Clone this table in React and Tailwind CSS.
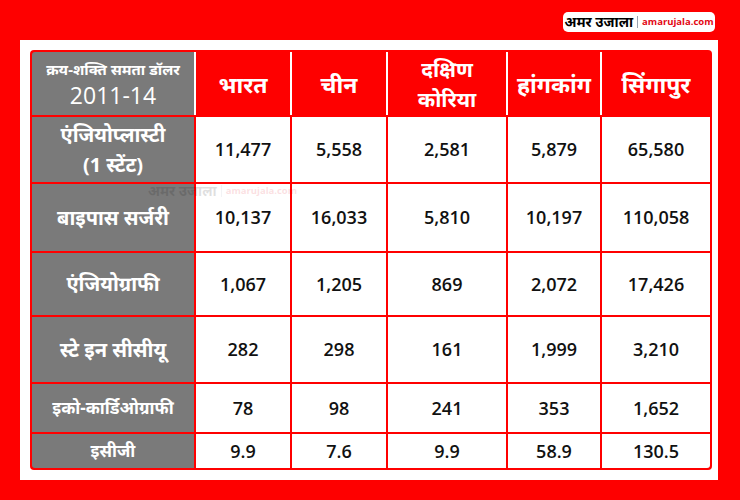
const headers = [
  ['भारत'],
  ['चीन'],
  ['दक्षिण', 'कोरिया'],
  ['हांगकांग'],
  ['सिंगापुर'],
];

const rows = [
  { label: ['एंजियोप्लास्टी', '(1 स्टेंट)'], size: 'text-[20px]', values: ['11,477', '5,558', '2,581', '5,879', '65,580'] },
  { label: ['बाइपास सर्जरी'], size: 'text-[20px]', values: ['10,137', '16,033', '5,810', '10,197', '110,058'] },
  { label: ['एंजियोग्राफी'], size: 'text-[20px]', values: ['1,067', '1,205', '869', '2,072', '17,426'] },
  { label: ['स्टे इन सीसीयू'], size: 'text-[20px]', values: ['282', '298', '161', '1,999', '3,210'] },
  { label: ['इको-कार्डिओग्राफी'], size: 'text-[17px]', values: ['78', '98', '241', '353', '1,652'] },
  { label: ['इसीजी'], size: 'text-[17px]', values: ['9.9', '7.6', '9.9', '58.9', '130.5'] },
];

const hindi = "font-['Noto_Sans','Noto_Sans_Devanagari','Lohit_Devanagari',sans-serif]";
const nums = "font-['Open_Sans','Noto_Sans',sans-serif]";

function Logo({ faint }) {
  return (
    <div className={`flex items-center gap-[4px] whitespace-nowrap ${faint ? 'opacity-[0.12]' : ''}`}>
      <span className={`${hindi} font-bold text-[14px] leading-none text-black`}>अमर उजाला</span>
      <span className="w-px h-[12px] bg-gray-400" />
      <span className={`${nums} font-bold text-[9.5px] leading-none text-[#e30613]`}>amarujala.com</span>
    </div>
  );
}

export default function App() {
  return (
    <div className="w-[740px] h-[500px] bg-[#fe0000] flex flex-col">
      <div className="h-[40px] flex items-start justify-end pr-[25px] pt-[12px]">
        <div className="h-[20px] w-[152px] bg-white rounded-[5px] flex items-center justify-center">
          <Logo />
        </div>
      </div>
      <div className="ml-[20px] w-[698px] h-[440px] bg-white pl-[10px] pr-[6px] pt-[10px]">
        <div className="relative grid grid-cols-[162px_94px_94px_118px_92px_108px] grid-rows-[63px_65px_67px_62px_65px_48px_34px] gap-[2px] p-[2px] bg-[#f00] rounded-[4px]">
          <div className="bg-[#7a7a7a] rounded-tl-[3px] flex flex-col items-center justify-center text-white">
            <span className={`${hindi} font-bold text-[15px] leading-[22px]`}>क्रय-शक्ति समता डॉलर</span>
            <span className={`${nums} text-[23px] leading-[30px]`}>2011-14</span>
          </div>
          {headers.map((h, i) => (
            <div
              key={i}
              className={`bg-[#fe0000] shadow-[-2px_0_0_#ffffff] flex flex-col items-center justify-center text-white ${hindi} font-bold ${h.length > 1 ? 'text-[21px] leading-[30px]' : 'text-[23px] leading-[30px]'} ${i === 4 ? 'rounded-tr-[3px]' : ''}`}
            >
              {h.map(t => <span key={t}>{t}</span>)}
            </div>
          ))}
          {rows.map((r, ri) => (
            <div key={ri} className="contents">
              <div className={`bg-[#7a7a7a] flex flex-col items-center justify-center text-white ${hindi} font-bold ${r.size} ${r.label.length > 1 ? 'leading-[30px]' : 'leading-[26px]'} ${ri === rows.length - 1 ? 'rounded-bl-[3px]' : ''}`}>
                {r.label.map(t => <span key={t}>{t}</span>)}
              </div>
              {r.values.map((v, vi) => (
                <div
                  key={vi}
                  className={`bg-white flex items-center justify-center text-[#111] ${nums} font-semibold text-[18px] ${ri === rows.length - 1 && vi === 4 ? 'rounded-br-[3px]' : ''}`}
                >
                  {v}
                </div>
              ))}
            </div>
          ))}
          <div className="absolute left-[118px] top-[134px]">
            <Logo faint />
          </div>
        </div>
      </div>
    </div>
  );
}
